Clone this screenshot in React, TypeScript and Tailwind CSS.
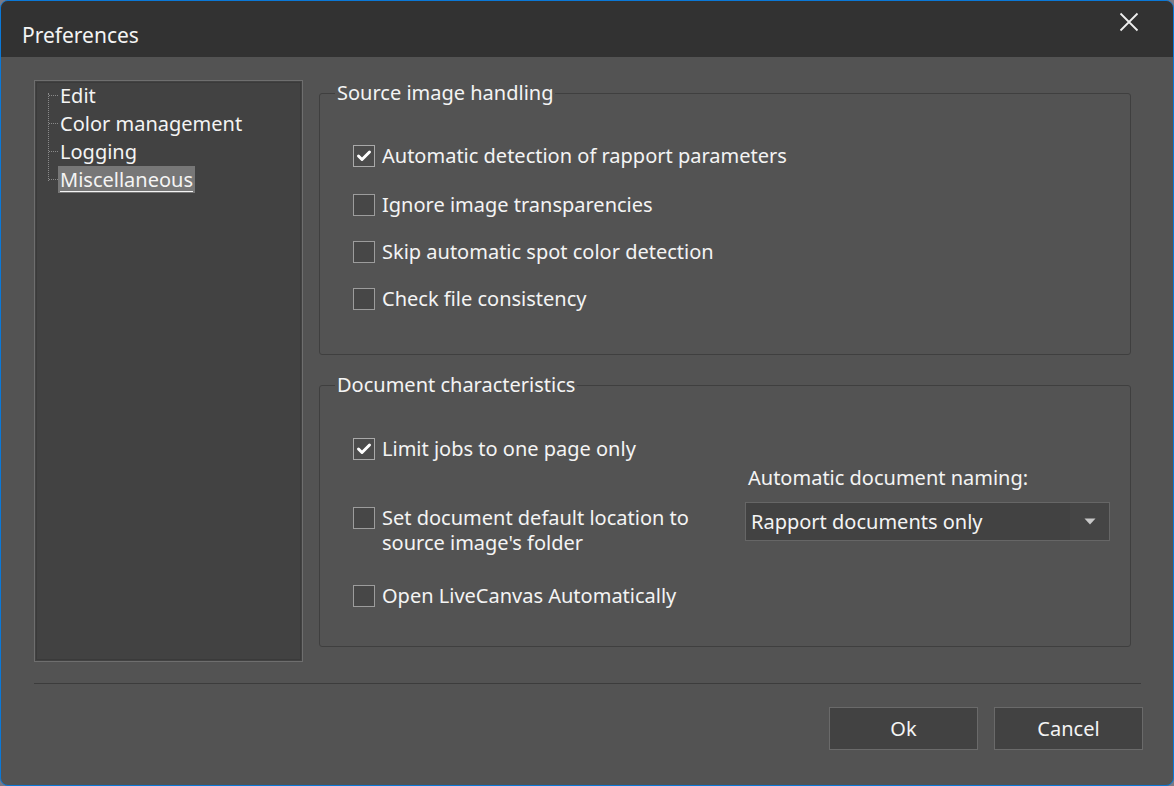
import React from "react";

const font = { fontFamily: '"Noto Sans", "Open Sans", sans-serif' };

function Check({ checked }: { checked?: boolean }) {
  return (
    <span
      className={
        "flex h-[22px] w-[22px] shrink-0 items-center justify-center border " +
        (checked ? "border-[#a9a9a9] bg-[#4c4c4c]" : "border-[#9c9c9c] bg-[#474747]")
      }
    >
      {checked && (
        <svg width="16" height="14" viewBox="0 0 16 14">
          <path d="M2.5 7 L6 10.5 L13.5 3" fill="none" stroke="#ffffff" strokeWidth="3" strokeLinecap="round" strokeLinejoin="round" />
        </svg>
      )}
    </span>
  );
}

function Row({ checked, children, className }: { checked?: boolean; children: React.ReactNode; className?: string }) {
  return (
    <div className={"flex items-start gap-[7px] " + (className ?? "")}>
      <Check checked={checked} />
      <span className="-mt-[2px] leading-[25px]">{children}</span>
    </div>
  );
}

export default function App() {
  return (
    <div className="h-[786px] w-[1174px] bg-[#7a7a86]" style={font}>
      <div className="flex h-full w-full flex-col overflow-hidden rounded-[8px] border border-[#0a78d7] bg-[#535353] text-[20px] text-[#f4f4f4]">
        <div className="flex h-[56px] shrink-0 items-center justify-between bg-[#323232] pl-[21px] pr-[34px]">
          <span className="mt-[14px] text-[21px]">Preferences</span>
          <svg width="20" height="20" viewBox="0 0 20 20" className="-mt-[14px]">
            <path d="M1.5 1.5 L18.5 18.5 M18.5 1.5 L1.5 18.5" stroke="#f0f0f0" strokeWidth="1.8" />
          </svg>
        </div>

        <div className="flex flex-1 flex-col pl-[33px] pr-[30px]">
          <div className="mr-[12px] mt-[23px] flex gap-[16px]">
            {/* Tree panel */}
            <div className="h-[582px] w-[269px] shrink-0 border border-[#6e6e6e] bg-[#424242] p-[1px]">
              <div className="relative h-full border border-[#3a3a3a]">
                <div className="absolute left-[11px] top-[10px] h-[88px] border-l border-dotted border-[#8a8a8a]" />
                <div className="-mt-[2px]">
                  {["Edit", "Color management", "Logging", "Miscellaneous"].map((t, i) => (
                    <div key={t} className="flex h-[28px] items-center">
                      <span className="ml-[12px] w-[9px] border-t border-dotted border-[#8a8a8a]" />
                      <span
                        className={
                          "px-[2px] leading-[27px] " +
                          (i === 3 ? "bg-[#777777] underline decoration-1 underline-offset-[4px]" : "")
                        }
                      >
                        {t}
                      </span>
                    </div>
                  ))}
                </div>
              </div>
            </div>

            {/* Right column */}
            <div className="flex flex-1 flex-col">
              <fieldset className="h-[275px] rounded-[3px] border border-[#3f3f3f] pl-[33px] pr-[20px] pb-0">
                <legend className="ml-[-18px] px-[2px] leading-[26px]">Source image handling</legend>
                <div className="mt-[39px] flex flex-col">
                  <Row checked>Automatic detection of rapport parameters</Row>
                  <Row className="mt-[26px]">Ignore image transparencies</Row>
                  <Row className="mt-[24px]">Skip automatic spot color detection</Row>
                  <Row className="mt-[24px]">Check file consistency</Row>
                </div>
              </fieldset>

              <fieldset className="mt-[17px] h-[275px] rounded-[3px] border border-[#3f3f3f] pl-[33px] pr-[20px] pb-0">
                <legend className="ml-[-18px] px-[2px] leading-[26px]">Document characteristics</legend>
                <div className="mt-[40px] flex">
                  <div className="flex w-[392px] flex-col">
                    <Row checked>Limit jobs to one page only</Row>
                    <Row className="mt-[46px]">
                      Set document default location to
                      <br />
                      source image's folder
                    </Row>
                    <Row className="mt-[30px]">Open LiveCanvas Automatically</Row>
                  </div>
                  <div className="mt-[27px] flex flex-1 flex-col">
                    <span className="ml-[3px] leading-[26px]">Automatic document naming:</span>
                    <div className="mt-[11px] flex h-[39px] items-stretch border border-[#666666] bg-[#424242]">
                      <span className="flex flex-1 items-center pl-[5px]">Rapport documents only</span>
                      <span className="flex w-[39px] items-center justify-center bg-[#454545]">
                        <svg width="12" height="7" viewBox="0 0 12 7">
                          <path d="M0.5 0.5 L11.5 0.5 L6 6.5 Z" fill="#c8c8c8" />
                        </svg>
                      </span>
                    </div>
                  </div>
                </div>
              </fieldset>
            </div>
          </div>

          <div className="mr-[2px] mt-[21px] h-px bg-[#3c3c3c]" />

          <div className="mt-[23px] flex justify-end gap-[16px]">
            <button className="h-[43px] w-[149px] border border-[#6a6a6a] bg-[#424242] text-[20px] text-[#f4f4f4]">Ok</button>
            <button className="h-[43px] w-[149px] border border-[#6a6a6a] bg-[#424242] text-[20px] text-[#f4f4f4]">Cancel</button>
          </div>
        </div>
      </div>
    </div>
  );
}
